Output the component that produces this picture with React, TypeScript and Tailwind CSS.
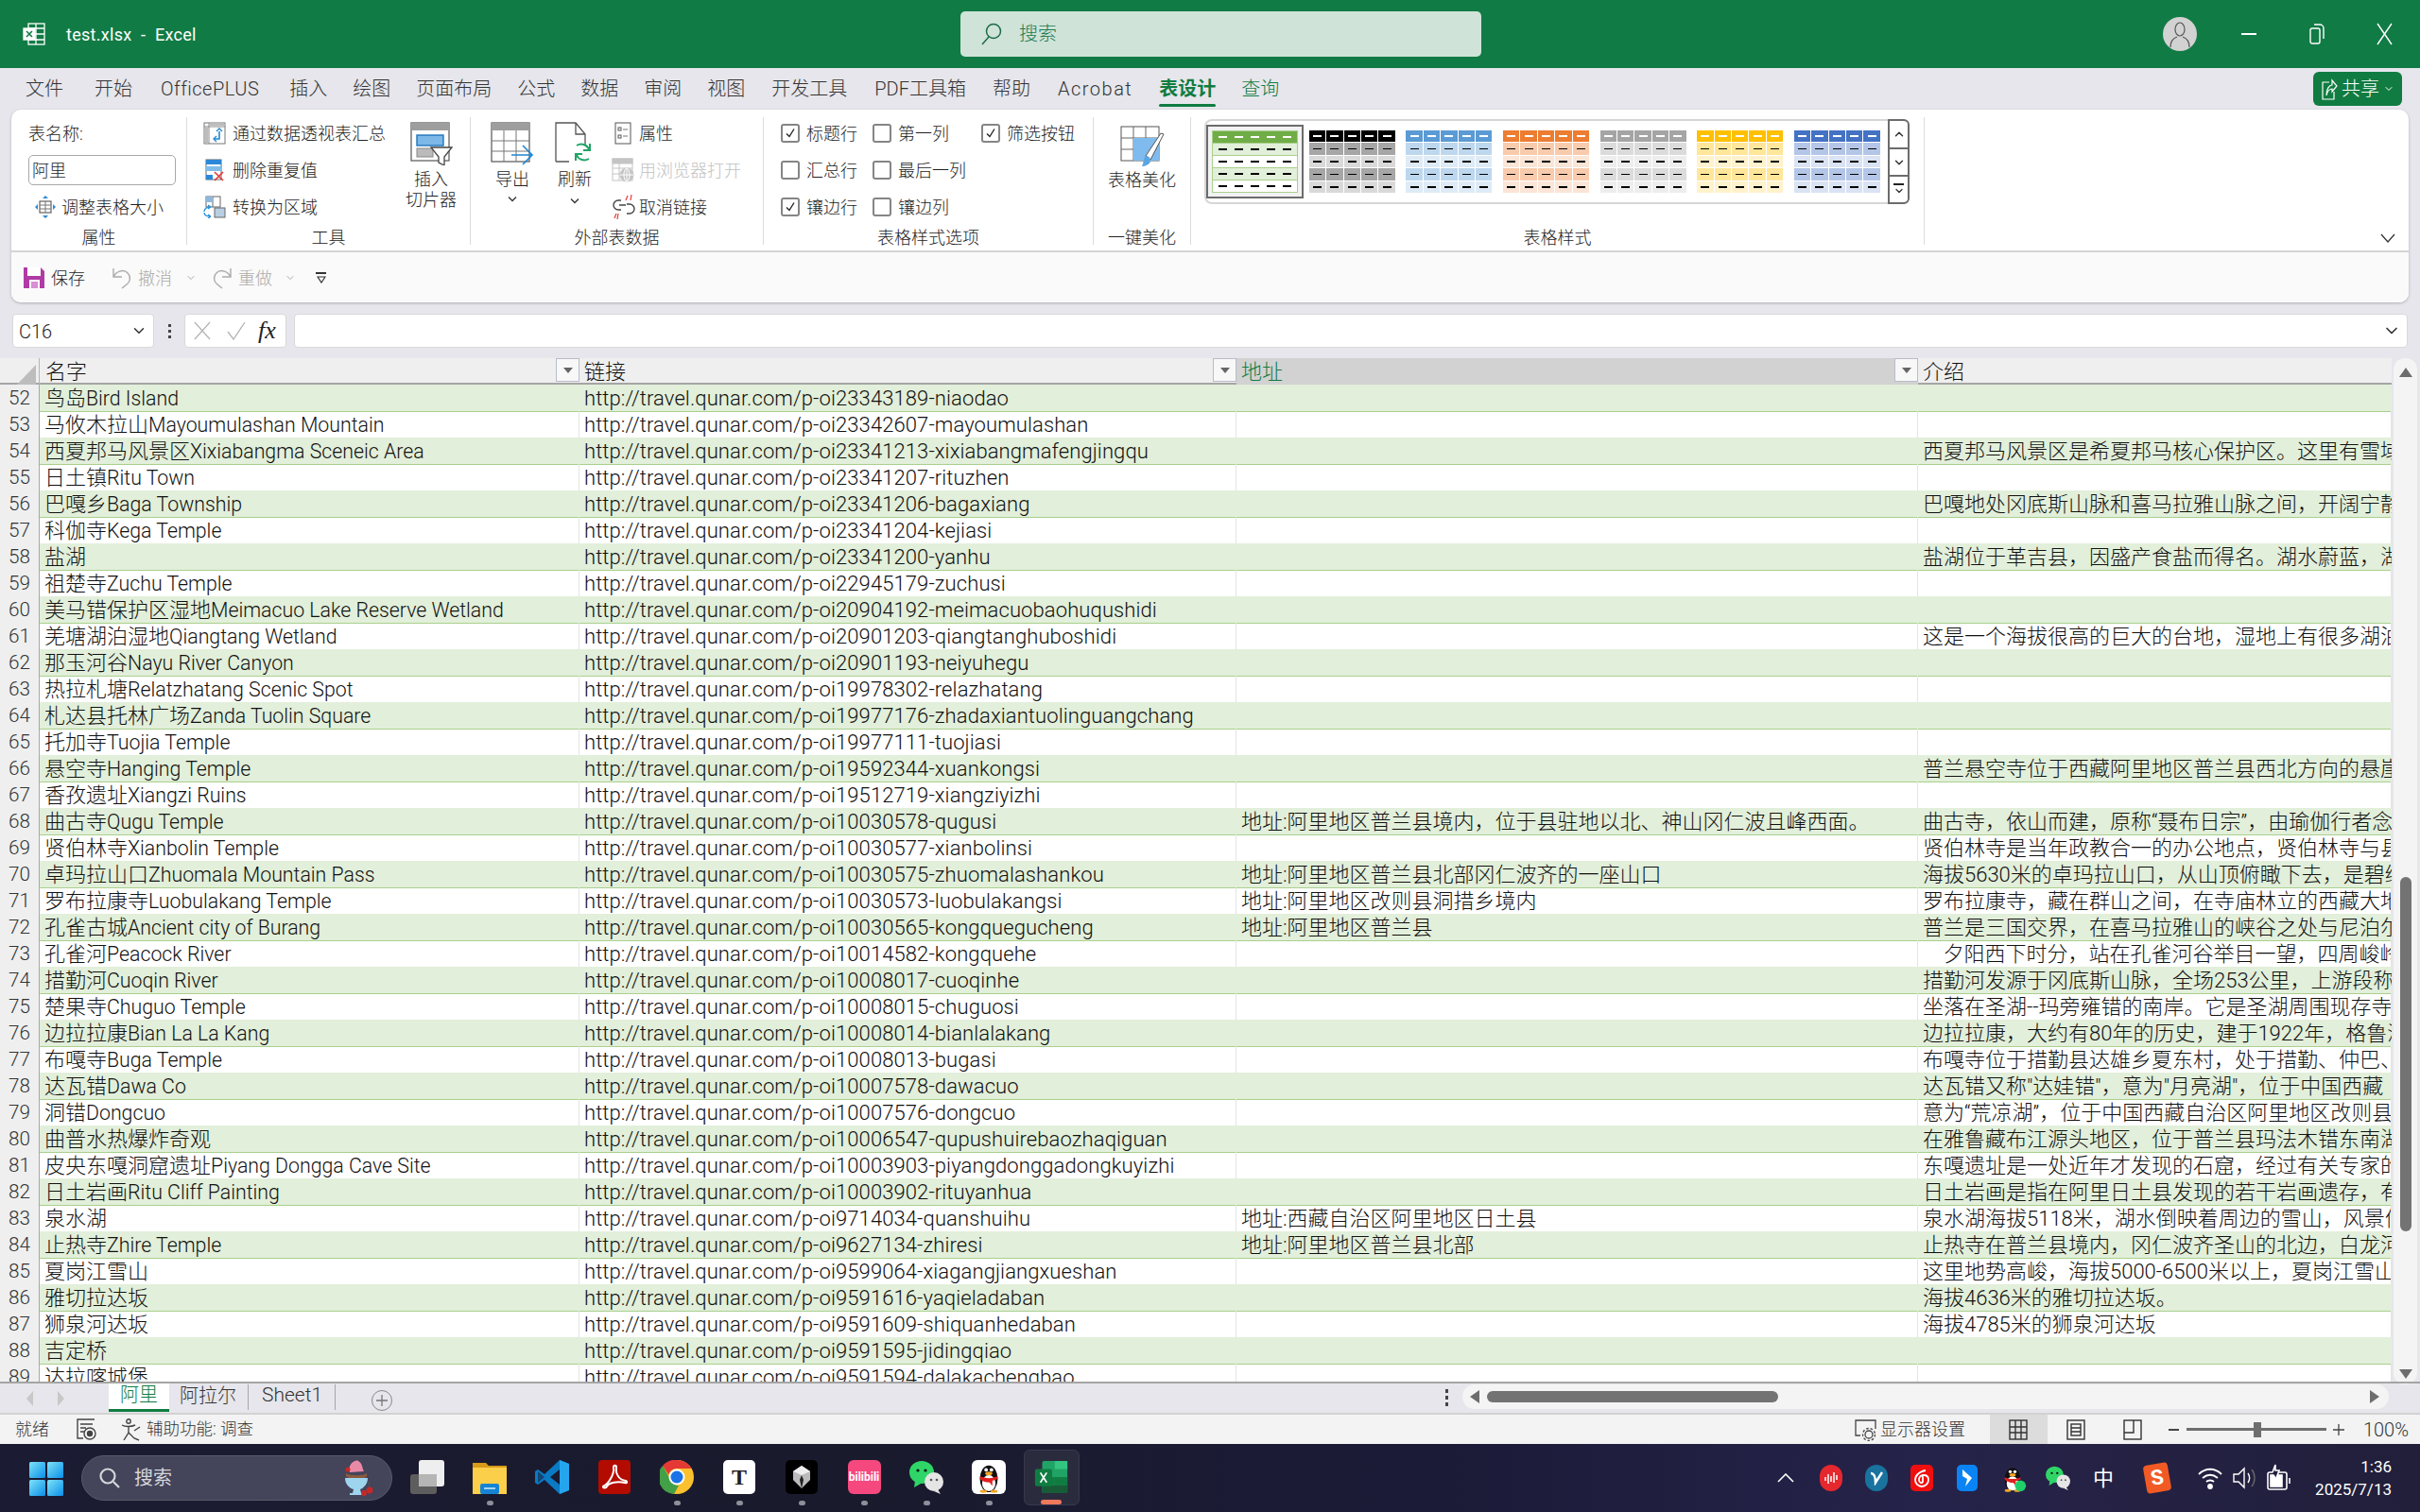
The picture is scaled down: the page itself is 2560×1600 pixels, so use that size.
import React from 'react';
import { ChevronDown, ChevronUp } from 'lucide-react';

type Row = { n: number; name: string; url: string; addr?: string; intro?: string };

const rows: Row[] = [
  { n: 52, name: '鸟岛Bird Island', url: 'oi23343189-niaodao' },
  { n: 53, name: '马攸木拉山Mayoumulashan Mountain', url: 'oi23342607-mayoumulashan' },
  { n: 54, name: '西夏邦马风景区Xixiabangma Sceneic Area', url: 'oi23341213-xixiabangmafengjingqu', intro: '西夏邦马风景区是希夏邦马核心保护区。这里有雪域' },
  { n: 55, name: '日土镇Ritu Town', url: 'oi23341207-rituzhen' },
  { n: 56, name: '巴嘎乡Baga Township', url: 'oi23341206-bagaxiang', intro: '巴嘎地处冈底斯山脉和喜马拉雅山脉之间，开阔宁静' },
  { n: 57, name: '科伽寺Kega Temple', url: 'oi23341204-kejiasi' },
  { n: 58, name: '盐湖', url: 'oi23341200-yanhu', intro: '盐湖位于革吉县，因盛产食盐而得名。湖水蔚蓝，湖' },
  { n: 59, name: '祖楚寺Zuchu Temple', url: 'oi22945179-zuchusi' },
  { n: 60, name: '美马错保护区湿地Meimacuo Lake Reserve Wetland', url: 'oi20904192-meimacuobaohuqushidi' },
  { n: 61, name: '羌塘湖泊湿地Qiangtang Wetland', url: 'oi20901203-qiangtanghuboshidi', intro: '这是一个海拔很高的巨大的台地，湿地上有很多湖泊' },
  { n: 62, name: '那玉河谷Nayu River Canyon', url: 'oi20901193-neiyuhegu' },
  { n: 63, name: '热拉札塘Relatzhatang Scenic Spot', url: 'oi19978302-relazhatang' },
  { n: 64, name: '札达县托林广场Zanda Tuolin Square', url: 'oi19977176-zhadaxiantuolinguangchang' },
  { n: 65, name: '托加寺Tuojia Temple', url: 'oi19977111-tuojiasi' },
  { n: 66, name: '悬空寺Hanging Temple', url: 'oi19592344-xuankongsi', intro: '普兰悬空寺位于西藏阿里地区普兰县西北方向的悬崖' },
  { n: 67, name: '香孜遗址Xiangzi Ruins', url: 'oi19512719-xiangziyizhi' },
  { n: 68, name: '曲古寺Qugu Temple', url: 'oi10030578-qugusi', addr: '地址:阿里地区普兰县境内，位于县驻地以北、神山冈仁波且峰西面。', intro: '曲古寺，依山而建，原称“聂布日宗”，由瑜伽行者念' },
  { n: 69, name: '贤伯林寺Xianbolin Temple', url: 'oi10030577-xianbolinsi', intro: '贤伯林寺是当年政教合一的办公地点，贤伯林寺与县' },
  { n: 70, name: '卓玛拉山口Zhuomala Mountain Pass', url: 'oi10030575-zhuomalashankou', addr: '地址:阿里地区普兰县北部冈仁波齐的一座山口', intro: '海拔5630米的卓玛拉山口，从山顶俯瞰下去，是碧绿' },
  { n: 71, name: '罗布拉康寺Luobulakang Temple', url: 'oi10030573-luobulakangsi', addr: '地址:阿里地区改则县洞措乡境内', intro: '罗布拉康寺，藏在群山之间，在寺庙林立的西藏大地' },
  { n: 72, name: '孔雀古城Ancient city of Burang', url: 'oi10030565-kongquegucheng', addr: '地址:阿里地区普兰县', intro: '普兰是三国交界，在喜马拉雅山的峡谷之处与尼泊尔' },
  { n: 73, name: '孔雀河Peacock River', url: 'oi10014582-kongquehe', intro: '\u00a0\u00a0\u00a0\u00a0夕阳西下时分，站在孔雀河谷举目一望，四周峻岭' },
  { n: 74, name: '措勤河Cuoqin River', url: 'oi10008017-cuoqinhe', intro: '措勤河发源于冈底斯山脉，全场253公里，上游段称' },
  { n: 75, name: '楚果寺Chuguo Temple', url: 'oi10008015-chuguosi', intro: '坐落在圣湖--玛旁雍错的南岸。它是圣湖周围现存寺' },
  { n: 76, name: '边拉拉康Bian La La Kang', url: 'oi10008014-bianlalakang', intro: '边拉拉康，大约有80年的历史，建于1922年，格鲁派' },
  { n: 77, name: '布嘎寺Buga Temple', url: 'oi10008013-bugasi', intro: '布嘎寺位于措勤县达雄乡夏东村，处于措勤、仲巴、' },
  { n: 78, name: '达瓦错Dawa Co', url: 'oi10007578-dawacuo', intro: '达瓦错又称"达娃错"，意为"月亮湖"，位于中国西藏' },
  { n: 79, name: '洞错Dongcuo', url: 'oi10007576-dongcuo', intro: '意为“荒凉湖”，位于中国西藏自治区阿里地区改则县' },
  { n: 80, name: '曲普水热爆炸奇观', url: 'oi10006547-qupushuirebaozhaqiguan', intro: '在雅鲁藏布江源头地区，位于普兰县玛法木错东南湖' },
  { n: 81, name: '皮央东嘎洞窟遗址Piyang Dongga Cave Site', url: 'oi10003903-piyangdonggadongkuyizhi', intro: '东嘎遗址是一处近年才发现的石窟，经过有关专家的' },
  { n: 82, name: '日土岩画Ritu Cliff Painting', url: 'oi10003902-rituyanhua', intro: '日土岩画是指在阿里日土县发现的若干岩画遗存，有' },
  { n: 83, name: '泉水湖', url: 'oi9714034-quanshuihu', addr: '地址:西藏自治区阿里地区日土县', intro: '泉水湖海拔5118米，湖水倒映着周边的雪山，风景优' },
  { n: 84, name: '止热寺Zhire Temple', url: 'oi9627134-zhiresi', addr: '地址:阿里地区普兰县北部', intro: '止热寺在普兰县境内，冈仁波齐圣山的北边，白龙河' },
  { n: 85, name: '夏岗江雪山', url: 'oi9599064-xiagangjiangxueshan', intro: '这里地势高峻，海拔5000-6500米以上，夏岗江雪山' },
  { n: 86, name: '雅切拉达坂', url: 'oi9591616-yaqieladaban', intro: '海拔4636米的雅切拉达坂。' },
  { n: 87, name: '狮泉河达坂', url: 'oi9591609-shiquanhedaban', intro: '海拔4785米的狮泉河达坂' },
  { n: 88, name: '吉定桥', url: 'oi9591595-jidingqiao' },
  { n: 89, name: '达拉喀城堡', url: 'oi9591594-dalakachengbao' },
];

// 各标签间距不一样，直接按截图量的
const tabs = [
  { t: '文件', cls: '' },
  { t: '开始', cls: 'ml-[33px]' },
  { t: 'OfficePLUS', cls: 'ml-[30px] tracking-[0.5px]' },
  { t: '插入', cls: 'ml-[32px]' },
  { t: '绘图', cls: 'ml-[27px]' },
  { t: '页面布局', cls: 'ml-[27px]' },
  { t: '公式', cls: 'ml-[27px]' },
  { t: '数据', cls: 'ml-[27px]' },
  { t: '审阅', cls: 'ml-[27px]' },
  { t: '视图', cls: 'ml-[27px]' },
  { t: '开发工具', cls: 'ml-[28px]' },
  { t: 'PDF工具箱', cls: 'ml-[29px]' },
  { t: '帮助', cls: 'ml-[28px]' },
  { t: 'Acrobat', cls: 'ml-[29px] tracking-[1.5px]' },
];

const thumbs = [
  { head: 'bg-[#000000]', a: 'bg-[#a6a6a6]', b: 'bg-[#d9d9d9]' },
  { head: 'bg-[#5b9bd5]', a: 'bg-[#bdd7ee]', b: 'bg-[#deebf7]' },
  { head: 'bg-[#ed7d31]', a: 'bg-[#f8cbad]', b: 'bg-[#fbe5d6]' },
  { head: 'bg-[#a5a5a5]', a: 'bg-[#dbdbdb]', b: 'bg-[#ededed]' },
  { head: 'bg-[#ffc000]', a: 'bg-[#ffe699]', b: 'bg-[#fff2cc]' },
  { head: 'bg-[#4472c4]', a: 'bg-[#b4c6e7]', b: 'bg-[#dae3f3]' },
];

const Thumb = ({ t }: { t: { head: string; a: string; b: string } }) => (
  <div className="grid h-[66px] w-[91px] grid-cols-5 grid-rows-5 gap-px">
    {Array.from({ length: 25 }).map((_, i) => {
      const r = Math.floor(i / 5);
      return (
        <div key={i} className={`flex items-center justify-center ${r === 0 ? t.head : r % 2 ? t.a : t.b}`}>
          <div className={`h-[1.5px] w-[9px] ${r === 0 ? 'bg-white' : 'bg-black'}`} />
        </div>
      );
    })}
  </div>
);

const GreenThumb = () => (
  <div className="flex h-[66px] w-[91px] flex-col border border-[#a9d08e] bg-white">
    {[0, 1, 2, 3, 4].map((r) => (
      <div key={r} className={`flex flex-1 items-center justify-around border-b border-[#a9d08e] px-[2px] last:border-b-0 ${r === 0 ? 'bg-[#70ad47]' : r % 2 ? 'bg-[#e2efda]' : 'bg-white'}`}>
        {[0, 1, 2, 3, 4].map((c) => (
          <div key={c} className={`h-[1.5px] w-[9px] ${r === 0 ? 'bg-white' : 'bg-black'}`} />
        ))}
      </div>
    ))}
  </div>
);

const Check = ({ on, label }: { on?: boolean; label: string }) => (
  <div className="flex h-[24px] items-center gap-[7px] whitespace-nowrap">
    <div className="flex h-[20px] w-[20px] items-center justify-center rounded-[3px] border-2 border-[#858585] bg-white">
      {on && (
        <svg width="14" height="14" viewBox="0 0 14 14" fill="none" stroke="#222" strokeWidth="1.4">
          <path d="M3 7.5l3 3 5-8" />
        </svg>
      )}
    </div>
    <span>{label}</span>
  </div>
);

const GroupLabel = ({ text }: { text: string }) => (
  <div className="h-[18px] text-center leading-[22px] text-[#222]">{text}</div>
);

const Caret = () => (
  <svg width="10" height="8" viewBox="0 0 10 8" fill="none" stroke="#333" strokeWidth="1.3">
    <path d="M1 1.5l4 4 4-4" />
  </svg>
);

const FilterBtn = () => (
  <div className="ml-auto flex h-[25px] w-[25px] shrink-0 items-center justify-center border border-[#b9bdc9] bg-[#f8f8f8]">
    <div className="h-0 w-0 border-x-[5px] border-t-[6px] border-x-transparent border-t-[#666]" />
  </div>
);

// 名字列里中文和英文字宽比例不同，拆开写
const Name = ({ s }: { s: string }) => {
  const m = s.match(/^([^\x00-\x7f]+)(.*)$/);
  return (
    <>
      {m ? m[1] : s}
      {m && m[2] && <span className="text-[21.3px]">{m[2]}</span>}
    </>
  );
};

/* ribbon icons */
const IconResize = () => (
  <svg width="24" height="26" viewBox="0 0 24 26" fill="none">
    <rect x="6" y="7" width="12" height="12" stroke="#444" fill="#fff" />
    <path d="M6 11h12M6 15h12M12 7v12" stroke="#777" />
    <path d="M12 1l-3 3h6zM12 25l-3-3h6zM1 13l3-3v6zM23 13l-3-3v6z" fill="#2b8bd6" />
  </svg>
);
const IconPivot = () => (
  <svg width="24" height="24" viewBox="0 0 24 24" fill="none">
    <rect x="1" y="1" width="22" height="22" stroke="#777" fill="#fff" />
    <path d="M1 5h22M6 1v22" stroke="#888" />
    <rect x="2" y="6" width="3" height="16" fill="#bdbdbd" />
    <rect x="7" y="2" width="15" height="2" fill="#bdbdbd" />
    <path d="M17 10v8h-6" stroke="#1f86d0" strokeWidth="1.6" />
    <path d="M14 15l-3 3 3 3M14 10l3-3 3 3" stroke="#1f86d0" strokeWidth="1.3" />
  </svg>
);
const IconDedupe = () => (
  <svg width="24" height="24" viewBox="0 0 24 24" fill="none">
    <rect x="3" y="1" width="16" height="21" stroke="#666" fill="#fff" />
    <rect x="3" y="1" width="16" height="5" fill="#2b88d8" />
    <rect x="3" y="8" width="16" height="5" fill="#7fbce9" />
    <rect x="3" y="17" width="7" height="5" fill="#2b88d8" />
    <path d="M12 14l9 9M21 14l-9 9" stroke="#e23a3a" strokeWidth="1.6" />
  </svg>
);
const IconConvert = () => (
  <svg width="24" height="24" viewBox="0 0 24 24" fill="none">
    <rect x="3" y="1" width="15" height="11" stroke="#666" fill="#fff" />
    <path d="M10 1v11" stroke="#666" />
    <rect x="3" y="1" width="7" height="6" fill="#8fb8dc" />
    <rect x="12" y="13" width="11" height="10" stroke="#666" fill="#b8cfe3" />
    <path d="M1 17c0-3 3-5 7-5M8 12l-3-2M8 12l-3 2M1 18c0 3 3 4 7 4M8 22l-3-2M8 22l-3 2" stroke="#2390d8" strokeWidth="1.3" />
  </svg>
);
const IconSlicer = () => (
  <svg width="46" height="46" viewBox="0 0 46 46" fill="none">
    <rect x="2" y="1" width="40" height="40" stroke="#555" fill="#fff" strokeWidth="1.2" />
    <rect x="2" y="1" width="40" height="8" fill="#9e9e9e" />
    <rect x="8" y="14" width="28" height="11" fill="#7db8e8" stroke="#1f74bd" strokeWidth="1.4" />
    <rect x="8" y="28" width="17" height="9" fill="#bbb" stroke="#888" />
    <path d="M23 27h22l-8 10v9l-6-3v-6z" fill="#fff" stroke="#444" strokeWidth="1.3" />
  </svg>
);
const IconExport = () => (
  <svg width="46" height="46" viewBox="0 0 46 46" fill="none">
    <rect x="1" y="1" width="40" height="41" stroke="#555" fill="#fff" strokeWidth="1.2" />
    <rect x="1" y="1" width="40" height="8" fill="#9e9e9e" />
    <path d="M1 20h40M1 31h40M14 9v33M27 9v33" stroke="#777" />
    <path d="M22 35h22M34 25l10 10-10 10" stroke="#1f86d0" strokeWidth="1.6" />
  </svg>
);
const IconRefresh = () => (
  <svg width="44" height="46" viewBox="0 0 44 46" fill="none">
    <path d="M2 42V1h21l10 12v12M23 1v12h10M2 42h14" stroke="#555" strokeWidth="1.3" />
    <path d="M24 25c5-3 11-1 13 4M38 23v7h-7M37 39c-5 3-11 1-13-4M23 41v-7h7" stroke="#21a366" strokeWidth="2" />
  </svg>
);
const IconProps = () => (
  <svg width="24" height="24" viewBox="0 0 24 24" fill="none">
    <rect x="4" y="1" width="16" height="22" stroke="#555" fill="#fff" />
    <rect x="7" y="6" width="3" height="3" stroke="#555" />
    <rect x="7" y="14" width="3" height="3" stroke="#555" />
    <path d="M12 8h5M12 15h5" stroke="#777" />
  </svg>
);
const IconBrowser = () => (
  <svg width="24" height="26" viewBox="0 0 24 26" fill="none" stroke="#c4c4c4">
    <rect x="1" y="1" width="21" height="23" fill="#fff" />
    <rect x="1" y="1" width="21" height="5" fill="#c4c4c4" />
    <path d="M1 11h21M1 17h21M8 6v18" />
    <circle cx="16" cy="18" r="7" fill="#c4c4c4" />
    <path d="M9 18h14M16 11v14" stroke="#fff" />
    <ellipse cx="16" cy="18" rx="3" ry="7" stroke="#fff" />
  </svg>
);
const IconUnlink = () => (
  <svg width="26" height="26" viewBox="0 0 26 26" fill="none">
    <path d="M10 6H7a5 5 0 0 0 0 10h3M8 11h7M16 20h3a5 5 0 0 0 0-10h-3" stroke="#444" strokeWidth="1.4" />
    <path d="M17 1l-2 5M21 0l-1 6M3 25l2-5M6 26l1-6" stroke="#e23a3a" strokeWidth="1.2" />
  </svg>
);
const IconBeautify = () => (
  <svg width="48" height="44" viewBox="0 0 48 44" fill="none">
    <rect x="2" y="1" width="40" height="36" stroke="#555" fill="#fff" />
    <path d="M2 13h40M2 25h40M15 1v36M28 1v36" stroke="#666" />
    <rect x="15" y="13" width="27" height="24" fill="#7fbbee" />
    <path d="M44 8L28 32l5 4 14-27z" fill="#fff" stroke="#555" />
    <path d="M27 33c3-2 6 0 6 4s-6 6-9 6c2-3 1-7 3-10z" fill="#5aa6e2" />
  </svg>
);
const IconSave = () => (
  <svg width="24" height="24" viewBox="0 0 24 24">
    <path d="M1 1h18l4 4v18H1z" fill="#b03aa6" />
    <rect x="5" y="1" width="14" height="9" fill="#fff" />
    <rect x="7" y="14" width="11" height="9" fill="#fff" />
    <rect x="9" y="16" width="7" height="7" fill="#d98fd3" />
  </svg>
);
const IconUndo = ({ flip }: { flip?: boolean }) => (
  <svg width="24" height="24" viewBox="0 0 24 24" fill="none" stroke="#aaa" strokeWidth="1.4" className={flip ? '-scale-x-100' : ''}>
    <path d="M3 2v9h9M3 11c3-6 10-8 14-5s5 9 0 13l-5 4" />
  </svg>
);

/* taskbar icons */
const IconStart = () => (
  <svg width="36" height="36" viewBox="0 0 36 36">
    <defs>
      <linearGradient id="st" x1="0" y1="0" x2="1" y2="1">
        <stop offset="0" stopColor="#7ee3f8" />
        <stop offset="1" stopColor="#0a8fe8" />
      </linearGradient>
    </defs>
    <rect x="0" y="0" width="17" height="17" rx="1.5" fill="url(#st)" />
    <rect x="19" y="0" width="17" height="17" rx="1.5" fill="url(#st)" />
    <rect x="0" y="19" width="17" height="17" rx="1.5" fill="url(#st)" />
    <rect x="19" y="19" width="17" height="17" rx="1.5" fill="url(#st)" />
  </svg>
);
const IconSundae = () => (
  <svg width="42" height="40" viewBox="0 0 42 40">
    <path d="M14 14c-3-8 6-14 9-12 5 3 4 8 6 11z" fill="#e88aa6" />
    <path d="M10 15c4 3 18 3 22 0 1 4-2 6-11 6S9 19 10 15z" fill="#8a5a3c" />
    <path d="M9 20h24c0 7-5 11-8 12l1 4h3v2H14v-2h3l1-4c-4-1-9-5-9-12z" fill="#9fd4ee" />
    <circle cx="12" cy="11" r="2.5" fill="#c62828" />
    <circle cx="35" cy="33" r="3.5" fill="#c62828" />
    <circle cx="29" cy="36" r="3" fill="#c62828" />
    <path d="M35 30l-1-6" stroke="#555" strokeWidth="1" />
  </svg>
);
const IconTaskview = () => (
  <svg width="36" height="36" viewBox="0 0 36 36">
    <rect x="0" y="15" width="28" height="21" rx="3" fill="#5d5d5d" />
    <rect x="9" y="0" width="27" height="28" rx="3" fill="#eee" />
    <rect x="9" y="15" width="19" height="13" fill="#b5b5b5" />
  </svg>
);
const IconFolder = () => (
  <svg width="36" height="36" viewBox="0 0 36 36">
    <path d="M0 3h14l3 3h19v30H0z" fill="#d89a18" />
    <rect x="0" y="8" width="36" height="28" fill="#fbcf4a" />
    <rect x="8" y="25" width="20" height="11" rx="2" fill="#1684d3" />
    <rect x="12" y="29" width="12" height="2" fill="#9fd5f7" />
  </svg>
);
const IconVscode = () => (
  <svg width="36" height="36" viewBox="0 0 36 36">
    <path d="M26 0l10 4v28l-10 4-16-15-7 5-3-2v-12l3-2 7 5z" fill="#0a7ac4" />
    <path d="M26 0l10 4v28l-10 4z" fill="#25a5ee" />
    <path d="M26 10l-10 8 10 8z" fill="#1a1a30" />
    <path d="M3 12l7 6-7 6z" fill="#1a1a30" opacity="0.55" />
  </svg>
);
const IconAcrobat = () => (
  <svg width="36" height="36" viewBox="0 0 36 36">
    <rect x="1" y="0" width="34" height="36" rx="4" fill="#b30b00" />
    <path d="M6 28c6-3 12-13 11-20 0-3 3-3 3 0-1 7 3 13 10 14 2 1 1 3-1 2-8-2-17 0-19 4-1 2-4 2-4 0z" fill="none" stroke="#fff" strokeWidth="2" />
  </svg>
);
const IconChrome = () => (
  <svg width="36" height="36" viewBox="0 0 36 36">
    <circle cx="18" cy="18" r="18" fill="#fbc02d" />
    <path d="M18 0a18 18 0 0 1 15.6 9H18a9 9 0 0 0-8.7 6.5L3 6A18 18 0 0 1 18 0z" fill="#e53935" />
    <path d="M3 6l8 14a9 9 0 0 0 9 7l-5 9A18 18 0 0 1 3 6z" fill="#43a047" />
    <circle cx="18" cy="18" r="8.5" fill="#fff" />
    <circle cx="18" cy="18" r="6.5" fill="#1a73e8" />
  </svg>
);
const IconQQ = ({ s = 36, badge }: { s?: number; badge?: boolean }) => (
  <svg width={s} height={s} viewBox="0 0 36 36">
    <ellipse cx="18" cy="20" rx="10" ry="15" fill="#111" />
    <ellipse cx="18" cy="25" rx="7.5" ry="9" fill="#fff" />
    <circle cx="15" cy="10" r="2" fill="#fff" />
    <circle cx="21" cy="10" r="2" fill="#fff" />
    <ellipse cx="18" cy="14" rx="4" ry="2" fill="#f5a623" />
    <path d="M8 17c6 3 14 3 20 0v3c-3 1-5 2-6 2v6l-3-4c-4 0-8-1-11-4z" fill="#e02020" />
    <ellipse cx="12" cy="34" rx="4" ry="1.8" fill="#f5a623" />
    <ellipse cx="24" cy="34" rx="4" ry="1.8" fill="#f5a623" />
    {badge && <circle cx="28" cy="28" r="7" fill="#1fcf6a" />}
  </svg>
);
const IconWechat = ({ s = 36 }: { s?: number }) => (
  <svg width={s} height={s} viewBox="0 0 36 36">
    <ellipse cx="13" cy="13" rx="13" ry="12" fill="#2fd667" />
    <path d="M6 22l-1 7 7-4z" fill="#2fd667" />
    <circle cx="9" cy="11" r="1.6" fill="#111" />
    <circle cx="17" cy="11" r="1.6" fill="#111" />
    <ellipse cx="26" cy="23" rx="10" ry="10" fill="#e5e5e5" />
    <path d="M30 31l3 5-7-3z" fill="#e5e5e5" />
    <circle cx="23" cy="21" r="1.3" fill="#555" />
    <circle cx="29" cy="21" r="1.3" fill="#555" />
  </svg>
);
const IconExcelApp = () => (
  <svg width="36" height="36" viewBox="0 0 36 36">
    <rect x="8" y="0" width="28" height="36" rx="2" fill="#21a366" />
    <rect x="22" y="0" width="14" height="9" fill="#33c481" />
    <rect x="8" y="9" width="14" height="9" fill="#21a366" />
    <rect x="22" y="18" width="14" height="9" fill="#107c41" />
    <rect x="8" y="27" width="28" height="9" fill="#185c37" />
    <rect x="8" y="18" width="14" height="9" fill="#107c41" />
    <rect x="0" y="9" width="19" height="19" rx="2" fill="#107c41" />
    <path d="M6 13l7 11M13 13l-7 11" stroke="#fff" strokeWidth="1.8" />
  </svg>
);

const TaskSlot = ({ children, dot, active }: { children: React.ReactNode; dot?: boolean; active?: boolean }) => (
  <div className="flex h-[72px] w-[66px] shrink-0 flex-col items-center justify-start">
    <div className={`flex h-[59px] w-[59px] flex-col items-center rounded-[6px] pt-[11px] mt-[6px] ${active ? 'border border-[#38384e] bg-[#2b2b3e]' : ''}`}>
      {children}
      <div className={`mt-[7px] h-[5px] rounded-full ${active ? 'w-[22px] bg-[#f0785c]' : dot ? 'w-[7px] bg-[#8f8f9a]' : 'w-[7px]'}`} />
    </div>
  </div>
);

const TraySlot = ({ children, cls }: { children: React.ReactNode; cls: string }) => (
  <div className={`flex shrink-0 items-center justify-center ${cls}`}>{children}</div>
);

export default function App() {
  return (
    <div className="flex h-[1600px] w-[2560px] flex-col overflow-hidden bg-[#e6e6ec] font-['Roboto','Noto_Sans_CJK_SC',sans-serif] text-[18px] font-light text-[#222]">
      {/* title bar */}
      <div className="flex h-[72px] shrink-0 items-center bg-[#117b45] text-white">
        <div className="flex w-[1016px] items-center pl-[24px]">
          <svg width="24" height="24" viewBox="0 0 24 24" fill="none" stroke="#fff" strokeWidth="1.3">
            <rect x="6" y="1" width="17" height="22" />
            <path d="M14 1v22M6 6h17M6 12h17M6 18h17" />
            <rect x="1" y="6" width="12" height="12" fill="#fff" />
            <path d="M4 9l6 6M10 9l-6 6" stroke="#117b45" strokeWidth="1.6" />
          </svg>
          <span className="ml-[22px] whitespace-pre font-normal tracking-[0.3px]">test.xlsx  -  Excel</span>
        </div>
        <div className="flex h-[48px] w-[551px] items-center rounded-[5px] bg-[#cfe3d9] pl-[21px] text-[20px] text-[#1c7a4c]">
          <svg width="24" height="24" viewBox="0 0 24 24" fill="none" stroke="#1c6b44" strokeWidth="1.5">
            <circle cx="14" cy="9" r="7.5" />
            <path d="M9 15l-7 8" />
          </svg>
          <span className="ml-[17px]">搜索</span>
        </div>
        <div className="ml-auto flex items-center">
          <div className="mr-[47px] flex h-[36px] w-[36px] items-center justify-center rounded-full bg-[#d2d2d2]">
            <svg width="24" height="30" viewBox="0 0 24 30" fill="none" stroke="#555" strokeWidth="1.2">
              <ellipse cx="12" cy="10" rx="5" ry="7" />
              <path d="M2 29c0-7 4-10 7-11M22 29c0-7-4-10-7-11" />
            </svg>
          </div>
          <div className="h-[2px] w-[16px] bg-white" />
          <svg className="ml-[56px]" width="16" height="22" viewBox="0 0 16 22" fill="none" stroke="#fff" strokeWidth="1.4">
            <rect x="1" y="5" width="10" height="16" rx="2" />
            <path d="M5 1h6a4 4 0 0 1 4 4v11" />
          </svg>
          <svg className="ml-[55px] mr-[29px]" width="17" height="24" viewBox="0 0 17 24" fill="none" stroke="#fff" strokeWidth="1.4">
            <path d="M1 1l15 22M16 1L1 23" />
          </svg>
        </div>
      </div>

      {/* ribbon tabs */}
      <div className="flex h-[44px] shrink-0 items-center pl-[27px] text-[20px] text-[#333]">
        <div className="flex">
          {tabs.map((t) => (
            <span key={t.t} className={`whitespace-nowrap ${t.cls}`}>{t.t}</span>
          ))}
          <span className="relative ml-[28px] whitespace-nowrap font-bold text-[#107c41]">
            表设计
            <span className="absolute left-0 right-0 top-[31px] h-[3px] rounded-[2px] bg-[#107c41]" />
          </span>
          <span className="ml-[27px] whitespace-nowrap text-[#107c41]">查询</span>
        </div>
        <div className="ml-auto mr-[19px] flex h-[36px] w-[94px] items-center justify-center gap-[4px] rounded-[6px] bg-[#107c41] text-white">
          <svg width="18" height="24" viewBox="0 0 18 24" fill="none" stroke="#fff" strokeWidth="1.2">
            <path d="M9 5H2v18h12v-8M6 19c0-7 3-11 6-11V3l5 6-5 6v-3c-2 0-5 2-6 7z" />
          </svg>
          <span>共享</span>
          <ChevronDown size={12} />
        </div>
      </div>

      {/* ribbon */}
      <div className="mx-[12px] flex h-[204px] shrink-0 flex-col rounded-[10px] bg-white shadow-[0_1px_3px_rgba(0,0,0,0.25)]">
        <div className="flex h-[151px] shrink-0 border-b-2 border-[#d4d4d4] pt-[8px]">
          {/* 属性 */}
          <div className="flex h-[135px] w-[186px] shrink-0 flex-col border-r border-[#dcdcdc]">
            <div className="flex flex-1 flex-col gap-[15px] pl-[18px] pt-[5px]">
              <div className="h-[24px] leading-[26px]">表名称:</div>
              <div className="flex h-[24px] items-center">
                <div className="flex h-[32px] w-[156px] shrink-0 items-center rounded-[5px] border border-[#a8a8a8] pl-[3px]">阿里</div>
              </div>
              <div className="flex h-[24px] items-center gap-[5px] pl-[6px]">
                <IconResize />
                <span>调整表格大小</span>
              </div>
            </div>
            <GroupLabel text="属性" />
          </div>
          {/* 工具 */}
          <div className="flex h-[135px] w-[300px] shrink-0 flex-col border-r border-[#dcdcdc]">
            <div className="flex flex-1 pl-[17px] pt-[5px]">
              <div className="flex w-[214px] flex-col gap-[15px]">
                <div className="flex h-[24px] items-center gap-[7px] whitespace-nowrap"><IconPivot />通过数据透视表汇总</div>
                <div className="flex h-[24px] items-center gap-[7px]"><IconDedupe />删除重复值</div>
                <div className="flex h-[24px] items-center gap-[7px]"><IconConvert />转换为区域</div>
              </div>
              <div className="flex w-[54px] flex-col items-center leading-[22px]">
                <IconSlicer />
                <div className="mt-[4px] whitespace-nowrap">插入</div>
                <div className="whitespace-nowrap">切片器</div>
              </div>
            </div>
            <GroupLabel text="工具" />
          </div>
          {/* 外部表数据 */}
          <div className="flex h-[135px] w-[310px] shrink-0 flex-col border-r border-[#dcdcdc]">
            <div className="flex flex-1 pl-[19px] pt-[5px]">
              <div className="flex w-[50px] flex-col items-center leading-[22px]">
                <IconExport />
                <div className="mt-[4px]">导出</div>
                <div className="mt-[6px]"><Caret /></div>
              </div>
              <div className="ml-[16px] flex w-[50px] flex-col items-center leading-[22px]">
                <IconRefresh />
                <div className="mt-[4px]">刷新</div>
                <div className="mt-[8px]"><Caret /></div>
              </div>
              <div className="ml-[14px] flex flex-col gap-[15px]">
                <div className="flex h-[24px] items-center gap-[5px]"><IconProps />属性</div>
                <div className="flex h-[24px] items-center gap-[5px] whitespace-nowrap text-[#c2c2c2]"><IconBrowser />用浏览器打开</div>
                <div className="flex h-[24px] items-center gap-[3px]"><IconUnlink />取消链接</div>
              </div>
            </div>
            <GroupLabel text="外部表数据" />
          </div>
          {/* 表格样式选项 */}
          <div className="flex h-[135px] w-[349px] shrink-0 flex-col border-r border-[#dcdcdc]">
            <div className="grid flex-1 grid-cols-[97px_115px_auto] content-start gap-y-[15px] pl-[18px] pt-[5px]">
              <Check on label="标题行" />
              <Check label="第一列" />
              <Check on label="筛选按钮" />
              <Check label="汇总行" />
              <Check label="最后一列" />
              <div />
              <Check on label="镶边行" />
              <Check label="镶边列" />
            </div>
            <GroupLabel text="表格样式选项" />
          </div>
          {/* 一键美化 */}
          <div className="flex h-[135px] w-[103px] shrink-0 flex-col border-r border-[#dcdcdc]">
            <div className="flex flex-1 flex-col items-center pt-[9px]">
              <IconBeautify />
              <div className="mt-[3px] whitespace-nowrap leading-[22px]">表格美化</div>
            </div>
            <GroupLabel text="一键美化" />
          </div>
          {/* 表格样式 */}
          <div className="flex h-[135px] w-[776px] shrink-0 flex-col border-r border-[#dcdcdc]">
            <div className="flex-1 pl-[14px] pt-[2px]">
              <div className="flex h-[90px] w-[746px] rounded-[8px] border-2 border-r-0 border-[#d6d6d6]">
                <div className="flex flex-1 items-start pl-[0px] pt-[4px]">
                  <div className="flex h-[78px] w-[103px] shrink-0 items-center justify-center border-2 border-[#6c6c6c] bg-[#f2f2f2]">
                    <GreenThumb />
                  </div>
                  {thumbs.map((t, i) => (
                    <div key={i} className="flex w-[102.6px] shrink-0 justify-center pt-[6px]">
                      <Thumb t={t} />
                    </div>
                  ))}
                </div>
                <div className="-my-[2px] flex w-[23px] shrink-0 flex-col rounded-r-[6px] border-2 border-[#6c6c6c]">
                  <div className="flex h-[30px] items-center justify-center border-b-2 border-[#6c6c6c]"><ChevronUp size={14} strokeWidth={2.5} color="#333" /></div>
                  <div className="flex h-[29px] items-center justify-center border-b-2 border-[#6c6c6c]"><ChevronDown size={14} strokeWidth={2.5} color="#333" /></div>
                  <div className="flex flex-1 flex-col items-center justify-center">
                    <div className="h-[2px] w-[11px] bg-[#222]" />
                    <ChevronDown size={12} strokeWidth={2.5} color="#333" />
                  </div>
                </div>
              </div>
            </div>
            <GroupLabel text="表格样式" />
          </div>
          <div className="flex flex-1 items-end justify-end pb-[8px] pr-[14px]">
            <svg width="16" height="10" viewBox="0 0 16 10" fill="none" stroke="#333" strokeWidth="1.3">
              <path d="M1 1l7 8 7-8" />
            </svg>
          </div>
        </div>
        {/* quick access */}
        <div className="flex flex-1 items-center rounded-b-[10px] bg-[#fafafa] pl-[12px]">
          <IconSave />
          <span className="ml-[6px] pt-[2px]">保存</span>
          <div className="ml-[27px]"><IconUndo /></div>
          <span className="ml-[5px] pt-[2px] text-[#ababab]">撤消</span>
          <div className="ml-[14px]"><ChevronDown size={12} color="#aaa" /></div>
          <div className="ml-[15px]"><IconUndo flip /></div>
          <span className="ml-[5px] pt-[2px] text-[#ababab]">重做</span>
          <div className="ml-[13px]"><ChevronDown size={12} color="#aaa" /></div>
          <div className="ml-[21px] flex flex-col items-center">
            <div className="h-[2px] w-[11px] bg-[#333]" />
            <svg className="mt-[2px]" width="10" height="8" viewBox="0 0 10 8"><path d="M1 1h8L5 7z" fill="none" stroke="#333" strokeWidth="1.2" /></svg>
          </div>
        </div>
      </div>

      {/* formula bar */}
      <div className="mt-[12px] flex h-[36px] shrink-0 px-[13px]">
        <div className="flex w-[150px] items-center justify-between rounded-[4px] border border-[#d9d9d9] bg-white pl-[6px] pr-[6px]">
          <span className="pt-[2px] text-[20px]">C16</span>
          <ChevronDown size={18} color="#333" />
        </div>
        <div className="flex w-[32px] flex-col items-center justify-center gap-[3px]">
          <div className="h-[3px] w-[3px] bg-[#444]" />
          <div className="h-[3px] w-[3px] bg-[#444]" />
          <div className="h-[3px] w-[3px] bg-[#444]" />
        </div>
        <div className="flex w-[108px] items-center rounded-[4px] border border-[#d9d9d9] bg-white pl-[9px]">
          <svg width="18" height="20" viewBox="0 0 18 20" fill="none" stroke="#b5b5b5" strokeWidth="1.3"><path d="M1 1l16 18M17 1L1 19" /></svg>
          <svg className="ml-[17px]" width="20" height="20" viewBox="0 0 20 20" fill="none" stroke="#b5b5b5" strokeWidth="1.3"><path d="M1 11l6 8L19 1" /></svg>
          <span className="ml-[13px] font-['Liberation_Serif',serif] text-[26px] font-normal italic leading-none text-[#222]">fx</span>
        </div>
        <div className="ml-[8px] flex flex-1 items-center justify-end rounded-[4px] border border-[#d9d9d9] bg-white pr-[6px]">
          <ChevronDown size={20} color="#333" />
        </div>
      </div>

      {/* sheet */}
      <div className="mt-[11px] flex h-[1083px] shrink-0">
        <div className="h-full w-[2530px] shrink-0 overflow-hidden bg-white text-[22px] text-[#111]">
          <div className="grid h-[28px] grid-cols-[42px_571px_695px_721px_501px] border-b-2 border-[#a5a5a5] bg-[#efefef] leading-[30px]">
            <div className="flex items-end justify-end border-r border-[#b5b5b5] pb-[2px] pr-[2px]">
              <svg width="24" height="24" viewBox="0 0 24 24"><path d="M23 0v24H0z" fill="#bdbdbd" /></svg>
            </div>
            <div className="flex pl-[6px]">名字<FilterBtn /></div>
            <div className="flex pl-[5px]">链接<FilterBtn /></div>
            <div className="flex border-b-[3px] border-[#107c41] bg-[#d2d2d2] pl-[5px] text-[#107c41]">地址<FilterBtn /></div>
            <div className="pl-[5px]">介绍</div>
          </div>
          {rows.map((r) => {
            const green = r.n % 2 === 0;
            const cell = `overflow-hidden whitespace-nowrap border-b border-[#a9d08e] pl-[5px] leading-[29px] ${green ? 'bg-[#e2efda]' : 'border-r-[#e4e4e4] border-r'}`;
            return (
              <div key={r.n} className="grid h-[28px] grid-cols-[42px_571px_695px_721px_501px]">
                <div className="border-b border-r border-b-[#d4d4d4] border-r-[#a8a8a8] bg-[#efefef] text-center text-[20.7px] leading-[28px] text-[#333]">{r.n}</div>
                <div className={cell}><Name s={r.name} /></div>
                <div className={`${cell} tracking-[0.1px]`}>{`http://travel.qunar.com/p-${r.url}`}</div>
                <div className={cell}>{r.addr}</div>
                <div className={cell}>{r.intro}</div>
              </div>
            );
          })}
        </div>
        <div className="ml-[2px] flex h-[1086px] w-[25px] shrink-0 flex-col items-center rounded-[12px] bg-[#f4f4f4]">
          <div className="mt-[10px] h-0 w-0 border-x-[7px] border-b-[10px] border-x-transparent border-b-[#6d6d6d]" />
          <div className="mt-[529px] h-[375px] w-[12px] rounded-[6px] bg-[#737373]" />
          <div className="mt-[146px] h-0 w-0 border-x-[7px] border-t-[10px] border-x-transparent border-t-[#6d6d6d]" />
        </div>
      </div>

      {/* sheet tabs */}
      <div className="flex h-[33px] shrink-0 border-t-2 border-[#a5a5a5] text-[20px] text-[#333]">
        <div className="flex w-[115px] shrink-0 items-center pl-[28px]">
          <div className="h-0 w-0 border-y-[8px] border-r-[7px] border-y-transparent border-r-[#c8c8c8]" />
          <div className="ml-[26px] h-0 w-0 border-y-[8px] border-l-[7px] border-y-transparent border-l-[#c8c8c8]" />
        </div>
        <div className="flex h-[30px] w-[64px] shrink-0 items-center justify-center border-b-[3px] border-[#107c41] bg-white pb-[3px] text-[#107c41]">阿里</div>
        <div className="ml-[11px] mt-[1px] flex h-[27px] w-[73px] items-center border-r border-[#a8a8a8] pb-[3px]">阿拉尔</div>
        <div className="ml-[14px] mt-[1px] flex h-[27px] w-[78px] items-center border-r border-[#a8a8a8] pb-[3px] text-[21px]">Sheet1</div>
        <div className="ml-[38px] mt-[7px] flex h-[22px] w-[22px] items-center justify-center rounded-full border border-[#8a8a8a] text-[#666]">
          <svg width="12" height="12" viewBox="0 0 12 12" stroke="#777" strokeWidth="1.3"><path d="M6 0v12M0 6h12" /></svg>
        </div>
        <div className="ml-[1114px] mt-[6px] flex flex-col gap-[3px]">
          <div className="h-[4px] w-[3px] bg-[#444]" />
          <div className="h-[4px] w-[3px] bg-[#444]" />
          <div className="h-[4px] w-[3px] bg-[#444]" />
        </div>
        <div className="ml-[15px] mt-[1px] flex h-[26px] w-[980px] items-center rounded-[13px] bg-[#f4f4f4] pl-[8px]">
          <div className="h-0 w-0 border-y-[7px] border-r-[10px] border-y-transparent border-r-[#6d6d6d]" />
          <div className="ml-[8px] h-[12px] w-[308px] rounded-[6px] bg-[#737373]" />
          <div className="ml-[626px] h-0 w-0 border-y-[7px] border-l-[10px] border-y-transparent border-l-[#6d6d6d]" />
        </div>
      </div>

      {/* status bar */}
      <div className="flex h-[33px] shrink-0 items-center border-t-2 border-[#d2d2d2] bg-[#f3f3f3] pl-[16px] text-[#333]">
        <span>就绪</span>
        <svg className="ml-[28px]" width="22" height="24" viewBox="0 0 22 24" fill="none" stroke="#444" strokeWidth="1.4">
          <path d="M20 1H2v20h6M5 6h13M5 10h6M5 14h4" />
          <circle cx="15" cy="16" r="6" />
          <circle cx="15" cy="16" r="2.5" fill="#444" />
        </svg>
        <svg className="ml-[26px]" width="22" height="24" viewBox="0 0 22 24" fill="none" stroke="#444" strokeWidth="1.4">
          <circle cx="8" cy="3" r="2.2" />
          <path d="M1 7c3 2 10 2 14 0M8 8v7l-5 8M8 15l6 6 5 2M14 13l6-4" />
        </svg>
        <span className="ml-[5px] text-[17.5px]">辅助功能: 调查</span>
        <div className="ml-auto flex h-full items-center">
          <svg width="24" height="24" viewBox="0 0 24 24" fill="none" stroke="#444" strokeWidth="1.3">
            <path d="M6 18H1V2h21v9" />
            <circle cx="15" cy="17" r="4" />
            <circle cx="15" cy="17" r="6.5" strokeDasharray="2.5 2" />
          </svg>
          <span className="ml-[3px]">显示器设置</span>
          <div className="ml-[26px] flex h-full w-[61px] items-center justify-center bg-[#dcdcdc]">
            <svg width="20" height="22" viewBox="0 0 20 22" fill="none" stroke="#333" strokeWidth="1.4"><rect x="1" y="1" width="18" height="20" /><path d="M1 8h18M1 14h18M7 1v20M13 1v20" /></svg>
          </div>
          <div className="flex h-full w-[60px] items-center justify-center">
            <svg width="20" height="22" viewBox="0 0 20 22" fill="none" stroke="#333" strokeWidth="1.4"><rect x="1" y="1" width="18" height="20" /><rect x="5" y="5" width="10" height="12" /><path d="M5 9h10M5 13h10" /></svg>
          </div>
          <div className="flex h-full w-[60px] items-center justify-center">
            <svg width="20" height="22" viewBox="0 0 20 22" fill="none" stroke="#333" strokeWidth="1.4"><rect x="1" y="1" width="18" height="20" /><path d="M1 14h10V1" /></svg>
          </div>
          <div className="ml-[8px] h-[2px] w-[11px] bg-[#444]" />
          <div className="ml-[8px] flex h-[16px] w-[148px] items-center">
            <div className="h-[3px] w-[71px] bg-[#6e6e6e]" />
            <div className="h-[16px] w-[8px] bg-[#6e6e6e]" />
            <div className="h-[3px] w-[69px] bg-[#6e6e6e]" />
          </div>
          <svg className="ml-[7px]" width="12" height="12" viewBox="0 0 12 12" stroke="#444" strokeWidth="1.3"><path d="M6 0v12M0 6h12" /></svg>
          <span className="ml-[20px] mr-[12px] text-[20px]">100%</span>
        </div>
      </div>

      {/* taskbar */}
      <div className="flex h-[72px] shrink-0 items-start bg-[linear-gradient(90deg,#1b1b33,#1a1a2d_35%,#1b1b38_60%,#26234a_80%,#211f3a)] font-normal text-white">
        <div className="ml-[31px] mt-[19px]"><IconStart /></div>
        <div className="ml-[19px] mt-[12px] flex h-[48px] w-[329px] items-center rounded-[24px] border border-[#5a5a6c] bg-[#44445a] pl-[17px] text-[20px] text-[#d6d6dc]">
          <svg width="24" height="24" viewBox="0 0 24 24" fill="none" stroke="#d6d6dc" strokeWidth="2.2"><circle cx="10" cy="10" r="7.5" /><path d="M16 16l6 6" /></svg>
          <span className="ml-[14px]">搜索</span>
          <div className="ml-auto mr-[16px]"><IconSundae /></div>
        </div>
        <div className="ml-[4px] flex">
          <TaskSlot><IconTaskview /></TaskSlot>
          <TaskSlot dot><IconFolder /></TaskSlot>
          <TaskSlot><IconVscode /></TaskSlot>
          <TaskSlot><IconAcrobat /></TaskSlot>
          <TaskSlot dot><IconChrome /></TaskSlot>
          <TaskSlot dot>
            <div className="flex h-[36px] w-[34px] items-center justify-center rounded-[5px] bg-white font-['Liberation_Serif',serif] text-[24px] font-bold leading-none text-[#222]">T</div>
          </TaskSlot>
          <TaskSlot dot>
            <div className="flex h-[36px] w-[34px] items-center justify-center rounded-[5px] bg-black">
              <svg width="24" height="26" viewBox="0 0 24 26"><path d="M12 1l9 6v9l-9 9-9-9V7z" fill="#bbb" /><path d="M12 1l9 6-9 4-9-4z" fill="#eee" /><path d="M12 11l-2 5 2 9 2-9z" fill="#222" /></svg>
            </div>
          </TaskSlot>
          <TaskSlot dot>
            <div className="flex h-[36px] w-[35px] flex-col items-center justify-center rounded-[6px] bg-[#f5487f] text-[12px] font-bold leading-none text-white">bilibili</div>
          </TaskSlot>
          <TaskSlot dot><IconWechat /></TaskSlot>
          <TaskSlot dot>
            <div className="flex h-[36px] w-[36px] items-center justify-center rounded-[6px] bg-white"><IconQQ s={34} /></div>
          </TaskSlot>
          <TaskSlot active><IconExcelApp /></TaskSlot>
        </div>
        <div className="ml-auto flex h-full items-center pr-[30px]">
          <TraySlot cls="w-[48px]">
            <svg width="18" height="10" viewBox="0 0 18 10" fill="none" stroke="#fff" strokeWidth="1.6"><path d="M1 9l8-8 8 8" /></svg>
          </TraySlot>
          <TraySlot cls="w-[48px]">
            <div className="flex h-[28px] w-[24px] items-center justify-center rounded-full bg-[#e5282e]">
              <svg width="16" height="16" viewBox="0 0 16 16" stroke="#fff" strokeWidth="1.5"><path d="M2 7v4M5 4v10M8 6v6M11 2v11M14 5v5" /></svg>
            </div>
          </TraySlot>
          <TraySlot cls="w-[48px]">
            <div className="flex h-[28px] w-[24px] items-center justify-center rounded-full bg-[#19739e]">
              <svg width="16" height="16" viewBox="0 0 16 16" fill="none" stroke="#fff" strokeWidth="2.4"><path d="M2 3c3 0 5 3 5 10L14 2" /></svg>
            </div>
          </TraySlot>
          <TraySlot cls="w-[48px]">
            <div className="flex h-[28px] w-[24px] items-center justify-center rounded-[5px] bg-[#f00f0f]">
              <svg width="18" height="20" viewBox="0 0 18 20" fill="none" stroke="#fff" strokeWidth="1.8"><path d="M13 2C7 3 2 7 2 12a7 7 0 0 0 14 0c0-3-2-5-5-5s-5 2-5 5 3 4 4 2V6" /></svg>
            </div>
          </TraySlot>
          <TraySlot cls="w-[48px]">
            <div className="flex h-[28px] w-[22px] items-center justify-center rounded-[5px] bg-[#0a84f5]">
              <svg width="14" height="20" viewBox="0 0 14 20"><path d="M2 1l10 9-7 9 2-8-5-3z" fill="#fff" /></svg>
            </div>
          </TraySlot>
          <TraySlot cls="w-[48px]"><IconQQ s={30} badge /></TraySlot>
          <TraySlot cls="w-[48px]"><IconWechat s={26} /></TraySlot>
          <TraySlot cls="w-[48px] text-[22px]">中</TraySlot>
          <TraySlot cls="w-[66px]">
            <div className="flex h-[30px] w-[26px] rotate-[-10deg] items-center justify-center rounded-[4px] bg-[#f15a24] text-[22px] font-bold leading-none text-white">S</div>
          </TraySlot>
          <TraySlot cls="w-[46px]">
            <svg width="26" height="26" viewBox="0 0 26 26" fill="none" stroke="#fff" strokeWidth="1.8">
              <path d="M1 9c7-7 17-7 24 0M5 13c5-4 11-4 16 0M9 17c2-2 6-2 8 0" />
              <circle cx="13" cy="22" r="2" fill="#fff" />
            </svg>
          </TraySlot>
          <TraySlot cls="w-[28px]">
            <svg width="26" height="28" viewBox="0 0 26 28" fill="none" stroke="#fff" strokeWidth="1.4">
              <path d="M1 10h5l6-6v20l-6-6H1z" />
              <path d="M16 9c2 3 2 7 0 10" />
              <path d="M20 5c4 5 4 13 0 18" stroke="#666" />
            </svg>
          </TraySlot>
          <TraySlot cls="w-[42px]">
            <svg width="26" height="30" viewBox="0 0 26 30" fill="none" stroke="#fff" strokeWidth="1.6">
              <rect x="2" y="9" width="20" height="18" rx="2" />
              <path d="M25 15v6" />
              <rect x="5" y="12" width="12" height="12" fill="#fff" />
              <path d="M7 9l3-8v6h4l-3 8" fill="#1f1d3a" />
            </svg>
          </TraySlot>
          <div className="flex w-[99px] flex-col items-end text-[17px] leading-[24px]">
            <span>1:36</span>
            <span>2025/7/13</span>
          </div>
        </div>
      </div>
    </div>
  );
}
